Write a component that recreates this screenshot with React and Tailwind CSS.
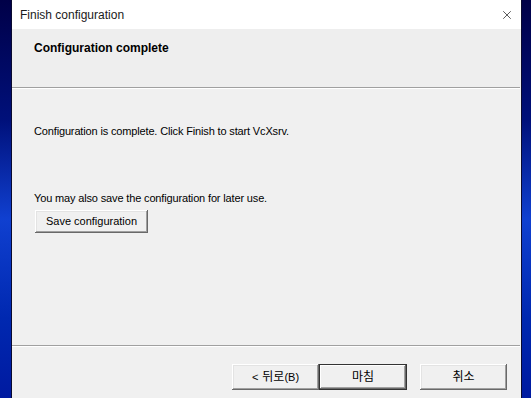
import { X } from 'lucide-react'

const winBtn =
  'flex items-center justify-center bg-[#f0f0f0] shadow-[inset_-1px_-1px_#696969,inset_1px_1px_#ffffff,inset_-2px_-2px_#a0a0a0,inset_2px_2px_#e3e3e3]'

export default function App() {
  return (
    <div
      className="flex h-[398px] w-[531px] overflow-hidden bg-[linear-gradient(180deg,#000048_0%,#00107a_30%,#1040d0_55%,#0028b0_80%,#001aa0_100%)] text-black"
      style={{ fontFamily: '"Liberation Sans", "Noto Sans CJK KR", sans-serif' }}
    >
      {/* desktop strip left */}
      <div className="w-[12px] shrink-0 border-r border-[#0a0a30]" />

      {/* dialog */}
      <div className="flex w-[509px] shrink-0 flex-col bg-[#f0f0f0]">
        {/* title bar */}
        <div className="flex h-[29px] items-center justify-between bg-white pl-[8px] pr-[7px]">
          <span className="text-[12px] text-[#1a1a1a]">Finish configuration</span>
          <X size={14} strokeWidth={1.1} className="text-black" />
        </div>

        {/* header */}
        <div className="flex h-[58px] items-start bg-[#eeeeee] pl-[22px] pt-[10px]">
          <span className="text-[12px] font-bold">Configuration complete</span>
        </div>
        <div className="mr-[1px] h-[2px] border-t border-[#a0a0a0] bg-white" />

        {/* body */}
        <div className="flex flex-1 flex-col pl-[22px] text-[11px]">
          <p className="mt-[34px] tracking-[-0.15px]">
            Configuration is complete. Click Finish to start VcXsrv.
          </p>
          <p className="mt-[50px] tracking-[-0.15px]">
            You may also save the configuration for later use.
          </p>
          <button className={`${winBtn} ml-[1px] mt-[4px] h-[23px] w-[113px] text-[11px]`}>
            Save configuration
          </button>
        </div>

        {/* footer */}
        <div className="mr-[1px] h-[2px] border-t border-[#a0a0a0] bg-white" />
        <div className="flex h-[51px] items-start pl-[220px] pt-[17px] text-[12px]">
          <button className={`${winBtn} h-[26px] w-[87px]`}>
            <span className="text-[11px]">&lt;</span>
            <span className="ml-[4px]">뒤로</span>
            <span className="text-[11px]">(B)</span>
          </button>
          <button className={`${winBtn} h-[26px] w-[88px] outline outline-1 outline-offset-[-1px] outline-[#333] shadow-[inset_-2px_-2px_#696969,inset_2px_2px_#ffffff,inset_-3px_-3px_#a0a0a0]`}>
            마침
          </button>
          <button className={`${winBtn} ml-[13px] h-[26px] w-[87px]`}>
            취소
          </button>
        </div>
      </div>

      {/* desktop strip right */}
      <div className="flex-1 border-l border-[#0a0a30]" />
    </div>
  )
}
